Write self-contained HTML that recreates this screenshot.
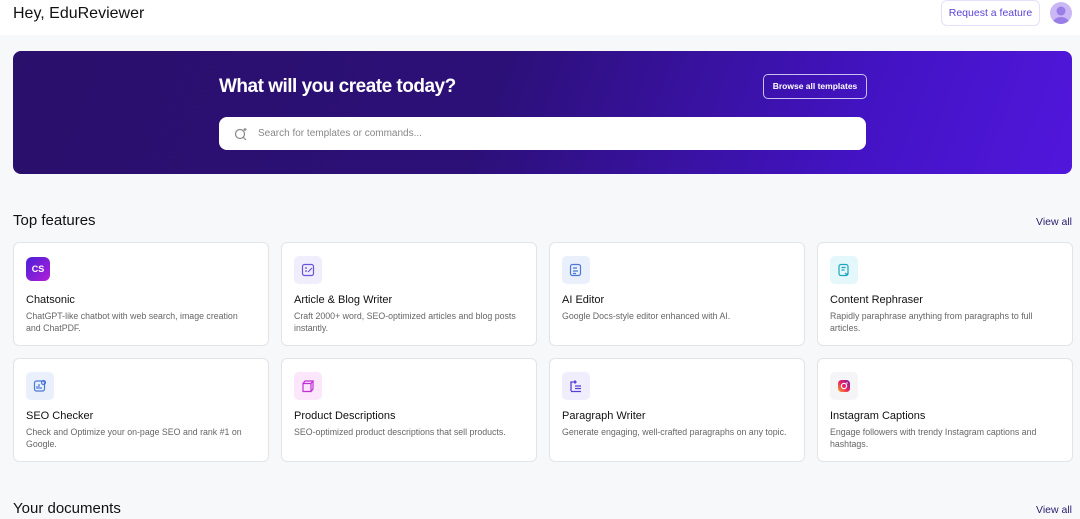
<!DOCTYPE html>
<html><head><meta charset="utf-8"><style>
*{box-sizing:border-box;margin:0;padding:0}
body{width:1080px;height:519px;overflow:hidden;background:#f7f8fa;font-family:"Liberation Sans",sans-serif;position:relative;color:#111}
.hdr{position:absolute;left:0;top:0;width:1080px;height:35px;background:#fff}
.hdr h1{position:absolute;left:13px;top:5px;font-size:16px;font-weight:400}
.req{position:absolute;left:941px;top:0;width:99px;height:26px;border:1px solid #e6e0fb;border-radius:6px;color:#5b44d8;font-size:10.5px;line-height:24px;text-align:center}
.av{position:absolute;left:1050px;top:2px;width:22px;height:22px;border-radius:50%;background:#c9b8f5;overflow:hidden}
.banner{position:absolute;left:13px;top:51px;width:1059px;height:123px;border-radius:8px;background:linear-gradient(110deg,#2a0f6b 0%,#2c1078 45%,#4313c4 80%,#5117dc 100%)}
.banner h2{position:absolute;left:206px;top:25px;color:#fff;font-size:19px;font-weight:700;letter-spacing:-0.5px}
.browse{position:absolute;left:750px;top:23px;width:104px;height:25px;border:1px solid #c8c0ee;border-radius:5px;color:#fff;font-size:8.5px;font-weight:700;text-align:center;line-height:23px}
.search{position:absolute;left:206px;top:66px;width:647px;height:33px;background:#fff;border-radius:8px}
.search span{position:absolute;left:39px;top:11px;font-size:10px;color:#888}
.sec{position:absolute;left:13px;font-size:15px}
.va{position:absolute;left:1036px;font-size:10.5px;color:#2a1c6e}
.card{position:absolute;width:256px;height:104px;background:#fff;border:1px solid #e3e4e8;border-radius:6px}
.ic{position:absolute;left:12px;top:13px;width:28px;height:28px;border-radius:5px;display:flex;align-items:center;justify-content:center}
.card h3{position:absolute;left:12px;top:51px;font-size:11px;font-weight:400;color:#111}
.card p{position:absolute;left:12px;top:68px;width:222px;font-size:8.8px;line-height:11.5px;color:#666}
</style></head><body>
<div class="hdr"><h1>Hey, EduReviewer</h1><div class="req">Request a feature</div>
<div class="av"><svg width="22" height="22"><circle cx="11" cy="9" r="4.5" fill="#9a7ee8"/><ellipse cx="11" cy="21" rx="8" ry="6" fill="#9a7ee8"/></svg></div></div>
<div class="banner"><h2>What will you create today?</h2><div class="browse">Browse all templates</div>
<div class="search"><svg style="position:absolute;left:14px;top:9px" width="16" height="16" viewBox="0 0 16 16" fill="none" stroke="#888" stroke-width="1.2"><circle cx="7" cy="8" r="4.5"/><path d="M10.5 11.5l2.5 2.5M12 2v3M10.5 3.5h3"/></svg><span>Search for templates or commands...</span></div></div>
<div class="sec" style="top:212px">Top features</div><div class="va" style="top:216px">View all</div>

<div class="card" style="left:13px;top:242px"><div class="ic" style="background:linear-gradient(135deg,#4a1fd8,#b21fd8);width:24px;height:24px;top:14px;border-radius:6px;color:#fff;font-size:9px;font-weight:700">CS</div><h3>Chatsonic</h3><p>ChatGPT-like chatbot with web search, image creation and ChatPDF.</p></div>
<div class="card" style="left:281px;top:242px"><div class="ic" style="background:#f0eefc"><svg width="14" height="14" viewBox="0 0 14 14" fill="none" stroke="#6a55d8" stroke-width="1.2"><rect x="1.5" y="1.5" width="11" height="11" rx="2"/><path d="M4 5h2M4 8h2M7 9l4-4"/></svg></div><h3>Article &amp; Blog Writer</h3><p>Craft 2000+ word, SEO-optimized articles and blog posts instantly.</p></div>
<div class="card" style="left:549px;top:242px"><div class="ic" style="background:#eaf0fb"><svg width="14" height="14" viewBox="0 0 14 14" fill="none" stroke="#4a78d8" stroke-width="1.2"><rect x="1.5" y="1.5" width="10" height="11" rx="2"/><path d="M4 5h4M4 8h5M4 10.5h3"/></svg></div><h3>AI Editor</h3><p>Google Docs-style editor enhanced with AI.</p></div>
<div class="card" style="left:817px;top:242px"><div class="ic" style="background:#e4f7fa"><svg width="14" height="14" viewBox="0 0 14 14" fill="none" stroke="#1ba6c0" stroke-width="1.2"><rect x="2" y="1.5" width="9" height="11" rx="2"/><path d="M4.5 4.5h4M4.5 7h3M8 10l1.5 1.5 2-2"/></svg></div><h3>Content Rephraser</h3><p>Rapidly paraphrase anything from paragraphs to full articles.</p></div>

<div class="card" style="left:13px;top:358px"><div class="ic" style="background:#eaf0fb"><svg width="14" height="14" viewBox="0 0 14 14" fill="none" stroke="#4a78d8" stroke-width="1.2"><rect x="1.5" y="2" width="10" height="10" rx="2"/><path d="M4 10V7M6 10V5M8 10V8"/><circle cx="10.5" cy="3.5" r="2"/></svg></div><h3>SEO Checker</h3><p>Check and Optimize your on-page SEO and rank #1 on Google.</p></div>
<div class="card" style="left:281px;top:358px"><div class="ic" style="background:#fbe6fb"><svg width="14" height="14" viewBox="0 0 14 14" fill="none" stroke="#c02ed8" stroke-width="1.2"><path d="M2 4.5h8v8H2zM2 4.5l2-2.5h8l-2 2.5M12 2v8l-2 2.5"/></svg></div><h3>Product Descriptions</h3><p>SEO-optimized product descriptions that sell products.</p></div>
<div class="card" style="left:549px;top:358px"><div class="ic" style="background:#f0eefc"><svg width="14" height="14" viewBox="0 0 14 14" fill="none" stroke="#5a3cd8" stroke-width="1.3"><path d="M2 12V3h5M5.5 1.5L7 3 5.5 4.5M6 7h6M6 9.5h6M2 12.5h10"/></svg></div><h3>Paragraph Writer</h3><p style="width:240px">Generate engaging, well-crafted paragraphs on any topic.</p></div>
<div class="card" style="left:817px;top:358px"><div class="ic" style="background:#f5f5f7"><svg width="14" height="14" viewBox="0 0 14 14"><defs><linearGradient id="g" x1="0" y1="1" x2="1" y2="0"><stop offset="0" stop-color="#f9a825"/><stop offset=".5" stop-color="#e91e63"/><stop offset="1" stop-color="#7b1fa2"/></linearGradient></defs><rect x="1" y="1" width="12" height="12" rx="3.5" fill="url(#g)"/><circle cx="7" cy="7" r="2.6" fill="none" stroke="#fff" stroke-width="1.2"/><circle cx="10" cy="4" r=".7" fill="#fff"/></svg></div><h3>Instagram Captions</h3><p>Engage followers with trendy Instagram captions and hashtags.</p></div>

<div class="sec" style="top:500px">Your documents</div><div class="va" style="top:504px">View all</div>
</body></html>
